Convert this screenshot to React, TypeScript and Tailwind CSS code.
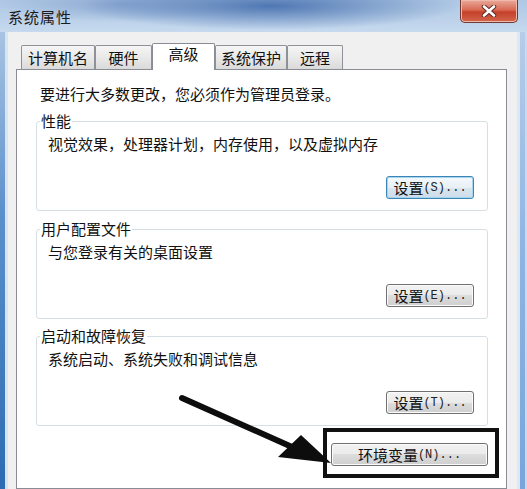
import React from 'react';

const cjk = "font-['Noto_Sans_CJK_SC','Microsoft_YaHei',sans-serif]";

interface WinButtonProps {
  label: string;
  hotkey: string;
  width: string;
  focused?: boolean;
}

function WinButton({ label, hotkey, width, focused = false }: WinButtonProps) {
  const skin = focused
    ? 'border-[#3c85b5] bg-[linear-gradient(to_bottom,#f4f9fc_0%,#e8f0f6_50%,#d9e6ef_50%,#cddde9_100%)] shadow-[inset_0_0_0_1px_#a6d6ef]'
    : 'border-[#707070] bg-[linear-gradient(to_bottom,#f2f2f2_0%,#ebebeb_50%,#dddddd_50%,#cfcfcf_100%)] shadow-[inset_0_0_0_1px_#fbfbfb]';

  return (
    <div className={`flex h-[23px] items-center justify-center rounded-[3px] border ${skin} ${width}`}>
      <span className="text-[15px] leading-[18px] text-[#111]">{label}</span>
      <span className="font-['Liberation_Mono',monospace] text-[12px] leading-[18px] text-[#222]">({hotkey})...</span>
    </div>
  );
}

interface GroupProps {
  title: string;
  desc: string;
  hotkey: string;
  focused?: boolean;
  className?: string;
}

function Group({ title, desc, hotkey, focused, className = '' }: GroupProps) {
  return (
    <div className={`ml-[19px] mr-[18px] flex h-[90px] flex-col rounded-[3px] border border-[#d5dfe5] ${className}`}>
      <div className="-mt-[10px] ml-[3px] w-fit bg-white px-[1px] text-[15px] leading-[18px] text-[#111]">{title}</div>
      <div className="mt-[5px] pl-[11px] text-[15px] leading-[18px] text-[#111]">{desc}</div>
      <div className="mb-[11px] mr-[13px] mt-auto flex justify-end">
        <WinButton label="设置" hotkey={hotkey} width="w-[88px]" focused={focused} />
      </div>
    </div>
  );
}

const tabs = [
  { name: '计算机名', w: 'w-[74px]' },
  { name: '硬件', w: 'w-[57px]' },
  { name: '高级', w: 'w-[63px]', active: true },
  { name: '系统保护', w: 'w-[72px]' },
  { name: '远程', w: 'w-[56px]' },
];

export default function App() {
  return (
    <div className={`relative flex h-[489px] w-[527px] flex-col overflow-hidden bg-[#b9cfe9] ${cjk}`}>
      {/* title bar */}
      <div className="flex h-[32px] shrink-0 items-start justify-between bg-[radial-gradient(ellipse_190px_24px_at_270px_6px,#4f77b3,transparent),radial-gradient(ellipse_120px_18px_at_120px_4px,#8eaad3,transparent),linear-gradient(to_bottom,#aec7e4,#c6d9ee)]">
        <div className="pl-[8px] pt-[8px] text-[15px] leading-[18px] tracking-[1px] text-[#1b1b1b]">系统属性</div>
        <div className="mr-[9px] flex h-[23px] w-[58px] items-center justify-center rounded-b-[5px] border border-t-0 border-[#6e3a33] bg-[linear-gradient(to_bottom,#e9ab9b_0%,#d96a53_45%,#c4402a_55%,#d4654d_100%)] shadow-[inset_0_0_0_1px_#f0b9ac]">
          <svg width="16" height="12" viewBox="0 0 16 12">
            <path d="M3 1.5 L13 10.5 M13 1.5 L3 10.5" stroke="#5a2a24" strokeWidth="4.5" strokeLinecap="round" />
            <path d="M3 1.5 L13 10.5 M13 1.5 L3 10.5" stroke="#ffffff" strokeWidth="2.6" strokeLinecap="round" />
          </svg>
        </div>
      </div>

      <div className="flex flex-1">
        {/* left frame */}
        <div className="flex w-[8px] shrink-0">
          <div className="w-[5px] bg-[linear-gradient(to_bottom,#a9c3e2,#5b90cb_40%,#2d6cb2)]" />
          <div className="w-[3px] bg-[#d6e5f5]" />
        </div>

        {/* client area */}
        <div className="flex flex-1 flex-col bg-[#f0f0f0] pl-[8px] pr-[10px] pt-[11px]">
          <div className="flex h-[26px] items-end pl-[5px]">
            {tabs.map((t) =>
              t.active ? (
                <div
                  key={t.name}
                  className={`relative z-10 -mb-[1px] flex h-[27px] items-start justify-center rounded-t-[2px] border border-b-0 border-[#898c95] bg-white pt-[1px] text-[15px] leading-[18px] text-[#111] ${t.w}`}
                >
                  {t.name}
                </div>
              ) : (
                <div
                  key={t.name}
                  className={`flex h-[24px] items-center justify-center rounded-t-[2px] border border-b-0 border-[#8e9196] bg-[linear-gradient(to_bottom,#f5f5f5,#e9e9e9_50%,#dadada)] pt-[1px] text-[15px] leading-[18px] text-[#111] ${t.w}`}
                >
                  {t.name}
                </div>
              )
            )}
          </div>

          {/* tab panel */}
          <div className="flex flex-1 flex-col border border-[#898c95] bg-white pt-[15px]">
            <div className="pl-[23px] text-[15px] leading-[18px] text-[#111]">要进行大多数更改，您必须作为管理员登录。</div>
            <Group className="mt-[18px]" title="性能" desc="视觉效果，处理器计划，内存使用，以及虚拟内存" hotkey="S" focused />
            <Group className="mt-[18px]" title="用户配置文件" desc="与您登录有关的桌面设置" hotkey="E" />
            <Group className="mt-[17px]" title="启动和故障恢复" desc="系统启动、系统失败和调试信息" hotkey="T" />
            <div className="mr-[7px] mt-[2px] flex justify-end">
              <div className="border-[4px] border-[#111] pb-[8px] pl-[4px] pr-[7px] pt-[11px]">
                <WinButton label="环境变量" hotkey="N" width="w-[157px]" />
              </div>
            </div>
          </div>
        </div>

        {/* right frame */}
        <div className="flex w-[10px] shrink-0">
          <div className="w-[3px] bg-[#dae7f5]" />
          <div className="w-[5px] bg-[linear-gradient(to_bottom,#b7cde8,#8db3e2_50%,#7aa5da)]" />
          <div className="w-[2px] bg-[#c7daf0]" />
        </div>
      </div>

      {/* annotation arrow */}
      <svg className="pointer-events-none absolute left-0 top-0" width="527" height="489" viewBox="0 0 527 489">
        <line x1="182" y1="398" x2="292" y2="447" stroke="#0d0d0d" strokeWidth="6" strokeLinecap="round" />
        <polygon points="278,457 301,435 331,463" fill="#0d0d0d" />
      </svg>
    </div>
  );
}
